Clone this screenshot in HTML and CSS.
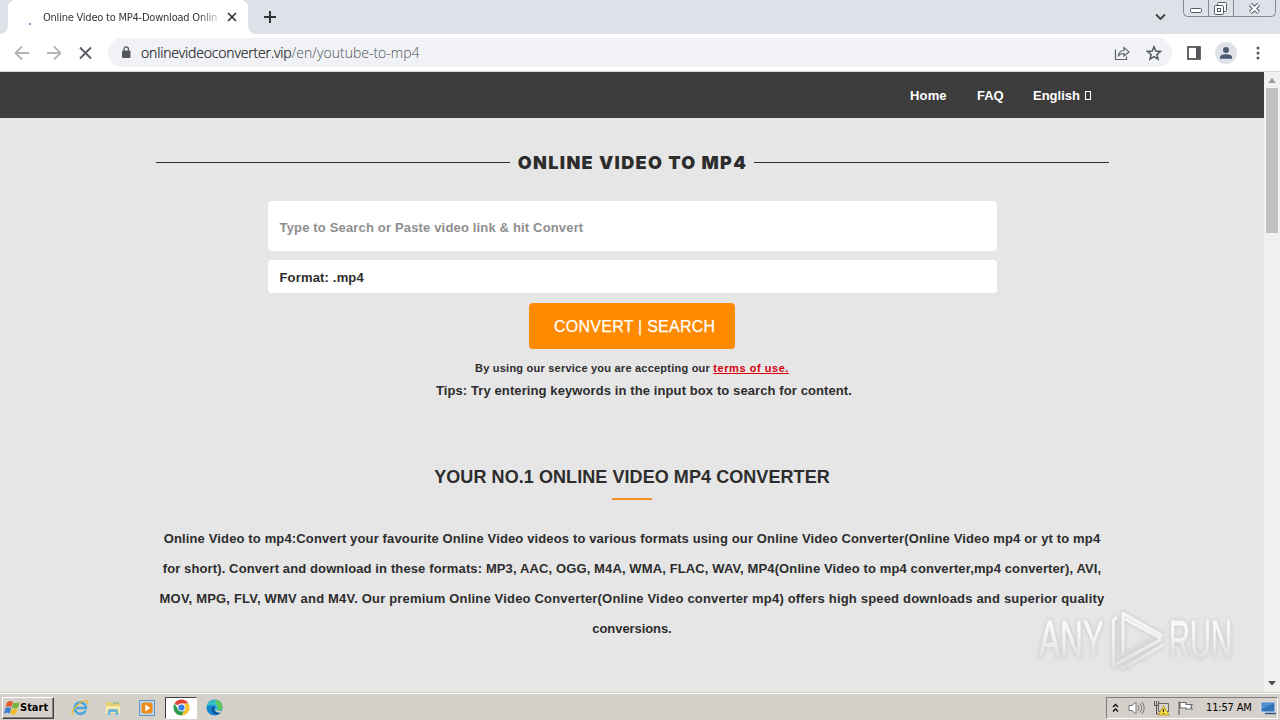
FILE: index.html
```html
<!DOCTYPE html>
<html lang="en">
<head>
<meta charset="utf-8">
<title>Online Video to MP4</title>
<link rel="stylesheet" href="styles.css">
</head>
<body>
<div class="screen">
  <header class="tabstrip">
    <div class="prev-edge"></div>
    <div class="tab">
      <span class="spinner"></span>
      <span class="tab-title">Online Video to MP4-Download Onlin</span>
      <svg class="tab-close" width="10" height="10" viewBox="0 0 10 10"><path d="M1 1l8 8M9 1l-8 8" stroke="#33363a" stroke-width="1.7"/></svg>
    </div>
    <div class="next-edge"><div class="next-fill"></div></div>
    <svg class="plus" width="12" height="12" viewBox="0 0 12 12"><path d="M6 0v12M0 6h12" stroke="#2f3338" stroke-width="2"/></svg>
    <div class="grow"></div>
    <svg class="chev" width="11" height="8" viewBox="0 0 11 8"><path d="M1 1.500l4.500 4.500 4.500-4.500" fill="none" stroke="#3c4043" stroke-width="1.800"/></svg>
    <svg class="winbtns" width="94" height="18" viewBox="0 0 94 18">
      <path d="M.5 0v12.500q0 4 4 4h84q4 0 4-4V0M25.500 0v16M50.500 0v16" fill="none" stroke="#858b96"/>
      <g fill="#fff" stroke="#535b68"><rect x="7.500" y="8.500" width="11" height="4" rx="1"/>
      <rect x="34.500" y="2.500" width="9" height="9" rx="1"/><rect x="31.500" y="5.500" width="9" height="9" rx="1"/><rect x="34.500" y="8.500" width="3" height="3"/></g>
      <path d="M67.500 4.500l8 8M75.500 4.500l-8 8" stroke="#535b68" stroke-width="4.200"/><path d="M67.800 4.800l7.400 7.400M75.200 4.800l-7.400 7.400" stroke="#fff" stroke-width="2.200"/>
    </svg>
  </header>
  <div class="toolbar">
    <svg class="navicons" width="80" height="16" viewBox="0 0 80 16" fill="none">
      <path d="M15 8H2M8 1.500L1.500 8 8 14.500M33 8h13M40 1.500L46.500 8 40 14.500" stroke="#b4b5b7" stroke-width="1.800"/>
      <path d="M66 2.500l11 11M77 2.500l-11 11" stroke="#5a5d61" stroke-width="1.900"/>
    </svg>
    <div class="omnibox">
      <svg width="10" height="13" viewBox="0 0 10 13"><rect x="1" y="4.500" width="8.500" height="7.500" rx="1" fill="#54575b"/><path d="M3 5V3a2.200 2.200 0 014.400 0v2" fill="none" stroke="#54575b" stroke-width="1.300"/></svg>
      <span class="url"><span class="host">onlinevideoconverter.vip</span><span class="path">/en/youtube-to-mp4</span></span>
      <div class="grow"></div>
      <svg width="16" height="16" viewBox="0 0 16 16" fill="none" stroke="#5f6368" stroke-width="1.200"><path d="M1.500 4.500v10h11v-3"/><path d="M4.500 10.500Q5 5.700 10 5.500V2.500l5 4.400L10 11V8.500Q6.500 8.300 4.500 10.500z"/></svg>
      <svg class="star" width="16" height="16" viewBox="0 0 16 16"><path d="M8 1.800l1.800 4.300 4.700.4-3.600 3 1.100 4.600L8 11.600l-4 2.500 1.100-4.600-3.600-3 4.700-.4z" fill="none" stroke="#55595e" stroke-width="1.500"/></svg>
    </div>
    <svg class="panel" width="14" height="14" viewBox="0 0 14 14"><rect x="1" y="1" width="12" height="12" fill="#fff" stroke="#54575b" stroke-width="1.800"/><path d="M9 1h4v12H9z" fill="#54575b"/></svg>
    <svg class="avatar" width="22" height="22" viewBox="0 0 22 22"><circle cx="11" cy="11" r="11" fill="#dee1e6"/><circle cx="11" cy="8" r="3" fill="#4d5871"/><path d="M5 16.700v-1.500q0-3 6-3t6 3v1.500z" fill="#4d5871"/></svg>
    <svg class="dots" width="4" height="14" viewBox="0 0 4 14" fill="#54575b"><circle cx="2" cy="2" r="1.500"/><circle cx="2" cy="7" r="1.500"/><circle cx="2" cy="12" r="1.500"/></svg>
  </div>
  <div class="viewport">
    <main class="page">
      <nav class="nav"><a class="n1">Home</a><a class="n2">FAQ</a><a class="n3">English</a><i class="tofu"></i></nav>
      <h1 class="title"><span class="title-text">ONLINE VIDEO TO MP4</span></h1>
      <form class="form">
        <div class="field search"><span class="placeholder">Type to Search or Paste video link &amp; hit Convert</span></div>
        <div class="field format"><span class="format-text">Format: .mp4</span></div>
        <div class="button"><span class="button-text">CONVERT | SEARCH</span></div>
      </form>
      <p class="terms"><span class="terms-a">By using our service you are accepting our </span><a class="terms-link">terms of use.</a></p>
      <p class="tips"><span>Tips: Try entering keywords in the input box to search for content.</span></p>
      <h2 class="heading"><span>YOUR NO.1 ONLINE VIDEO MP4 CONVERTER</span></h2>
      <div class="rule"></div>
      <div class="copy">
        <span class="l1">Online Video to mp4:Convert your favourite Online Video videos to various formats using our Online Video Converter(Online Video mp4 or yt to mp4</span>
        <span class="l2">for short). Convert and download in these formats: MP3, AAC, OGG, M4A, WMA, FLAC, WAV, MP4(Online Video to mp4 converter,mp4 converter), AVI,</span>
        <span class="l3">MOV, MPG, FLV, WMV and M4V. Our premium Online Video Converter(Online Video converter mp4) offers high speed downloads and superior quality</span>
        <span class="l4">conversions.</span>
      </div>
      <div class="watermark">
        <span class="any">ANY</span>
        <svg width="62" height="66" viewBox="0 0 62 66" fill="none" stroke-linejoin="round" stroke-linecap="round">
          <defs><linearGradient id="fade" gradientUnits="userSpaceOnUse" x1="0" y1="5" x2="0" y2="62"><stop offset="0" stop-color="#f8f8f8"/><stop offset=".5" stop-color="#f0f0f0"/><stop offset="1" stop-color="#dfdfdf"/></linearGradient></defs>
          <path d="M9 11L6.500 12.500V58.500L53 33M16 47V6.500L54.700 28.200L53 31L19 12.500M14.500 59.500L16 61.500L55 38.500" stroke="url(#fade)" stroke-width="3.200"/>
          <path d="M11 12V50L46 31" stroke="#dcdcdc" stroke-width="1.500"/>
        </svg>
        <span class="run">RUN</span>
      </div>
    </main>
    <div class="scrollbar">
      <svg width="16" height="16" viewBox="0 0 16 16"><path d="M4 11l4-5 4 5z" fill="#9b9b9b"/></svg>
      <div class="thumb"></div><div class="grow"></div>
      <svg width="16" height="18" viewBox="0 0 16 18"><path d="M4 7l4 4.500 4-4.500z" fill="#4b4b4b"/></svg>
    </div>
  </div>
  <footer class="taskbar">
    <div class="start">
      <svg width="17" height="16" viewBox="0 0 17 16"><path d="M4 2.500q3-2.500 6-.5L8.500 7q-3-1.500-6 .5z" fill="#e6582a"/><path d="M10.500 2.500q3 1.500 6-.5L15 7.500q-3 2-6 0z" fill="#72b43c"/><path d="M2.200 8.500q3-2 6-.5l-1.500 5.500q-3-1.500-6 .5z" fill="#3d82ce"/><path d="M8.700 8.500q3 1.500 6-.5l-1.500 5.500q-3 2-6 .3z" fill="#f4bd2a"/></svg>
      <span>Start</span>
    </div>
    <svg class="ie" width="18" height="18" viewBox="0 0 18 18" fill="none"><path d="M14.500 11.500A5.700 5.700 0 1 1 15 9H5" stroke="#4ba6e0" stroke-width="2.600"/><path d="M2 16Q-1 13 6 6.500T16.500 2q1 .8-.5 3.500" stroke="#e8bd38" stroke-width="1.300"/></svg>
    <svg class="folder" width="18" height="18" viewBox="0 0 18 18"><path d="M2 3h5l1 1.500h8V14H2z" fill="#e4cf72"/><path d="M2 7h14v7H2z" fill="#f6eaa6"/><path d="M4 16v-4q0-2 2-2h6q2 0 2 2v4h-2.500v-3h-5v3z" fill="#68b5d5"/><path d="M9 4h6" stroke="#79b46c"/></svg>
    <svg class="media" width="16" height="16" viewBox="0 0 16 16"><path d="M.5.5h15v15H.5z" fill="#b9d5ec" stroke="#6494c5"/><rect x="2.500" y="2.500" width="11" height="11" rx="3" fill="#f28b18"/><path d="M6.300 4.500v7l5-3.500z" fill="#fff"/></svg>
    <div class="active"><svg width="17" height="17" viewBox="0 0 18 18"><circle cx="9" cy="9" r="8.500" fill="#fff"/><path d="M9 9L1.640 4.750A8.500 8.500 0 0116.360 4.750L9 5z" fill="#e14335"/><path d="M9 5h7.500A8.500 8.500 0 019 17.500L12.500 11z" fill="#f9c32d"/><path d="M1.640 4.750A8.500 8.500 0 009 17.500L12.500 11 9 12 5.500 11z" fill="#2c9b4b"/><circle cx="9" cy="9" r="4.200" fill="#fff"/><circle cx="9" cy="9" r="3.300" fill="#397ee8"/></svg></div>
    <svg class="edge" width="17" height="17" viewBox="0 0 17 17"><circle cx="8.500" cy="8.500" r="8" fill="#1686cf"/><path d="M.6 8A8 8 0 0116.500 8q.3 4-4.500 4-3 0-2-2 1-4-3.500-4Q2 6 .6 8z" fill="#36bfc5"/><path d="M9 1q7 0 7.500 7 0 4-5 3.500 1.500-3-.5-5z" fill="#62c75b"/><path d="M6 8q-2 6 4.500 7.500 3 0 4.500-2.500-5 2-6.500-1T9 8z" fill="#125299"/><path d="M10 8.500q-.5 3.500 4 3.500h3v2l-5-.5q-4-1-2-5z" fill="#d5d0c9"/></svg>
    <div class="grow"></div>
    <div class="tray">
      <svg class="more" width="7" height="10" viewBox="0 0 7 10" fill="none" stroke="#111" stroke-width="1.400"><path d="M1 4l2.500-2.500L6 4M1 8.500L3.500 6 6 8.500"/></svg>
      <svg class="vol" width="17" height="16" viewBox="0 0 17 16" fill="none" stroke="#77797b"><path d="M1 5.500h3L8 2v12l-4-3.500H1z" fill="#fff"/><path d="M10 5q2 3 0 6M12 3.500q3.500 4.500 0 9M14 2q4.500 6 0 12"/></svg>
      <svg class="net" width="17" height="16" viewBox="0 0 17 16"><path d="M5.500 3.500h10v8h-10z" fill="#d6d6d0" stroke="#666"/><path d="M1.500 1v4.500h4V1M3.500 1v13h4" fill="none" stroke="#555"/><path d="M10.500 6l5.500 9H5.500z" fill="#ffe14b" stroke="#ba9b24"/><path d="M10.500 9v3m0 1v1" stroke="#333" stroke-width="1.300"/></svg>
      <svg class="flag" width="17" height="16" viewBox="0 0 17 16"><path d="M2 15V1.500M3 2.500h6v2h6q-2 2.500 0 4.500H9V8H3z" fill="#fff" stroke="#6c6d6e" stroke-width="1.200"/></svg>
      <span class="clock">11:57 AM</span>
      <svg class="desk" width="17" height="14" viewBox="0 0 17 14"><path d="M1 1h14v10H1z" fill="#3275bb" stroke="#d6e1eb"/><path d="M2 2h12L2 8z" fill="#528fd0"/><path d="M5 12.500h11" stroke="#28568e" stroke-width="1.500"/></svg>
    </div>
  </footer>
</div>
</body>
</html>
```
FILE: styles.css
```css
* { box-sizing: border-box; }
body { margin: 0; font-family: "Liberation Sans", Arial, sans-serif; }
svg { display: block; flex: none; }
h1, h2, p { margin: 0; }
.screen { width: 1280px; height: 720px; display: flex; flex-direction: column; overflow: hidden; }
.grow { flex: 1; }
.tabstrip { height: 34px; flex: none; display: flex; background: linear-gradient(90deg, #fff 250px, #dee1e8 250px); }
.prev-edge { width: 8px; background: #dee1e8; border-bottom-right-radius: 8px; }
.tab { width: 240px; display: flex; align-items: center; background: radial-gradient(circle at 8px 8px, #fff 8px, #dee1e8 8.500px) left top / 8px 8px no-repeat, radial-gradient(circle at 0 8px, #fff 8px, #dee1e8 8.500px) right top / 8px 8px no-repeat, #fff; }
.spinner { width: 2px; height: 2px; margin: 13px 12px 0 21px; background: #3d78c7; border-radius: 1px; }
.tab-title { width: 176px; white-space: nowrap; color: #33363a; font: 11px "DejaVu Sans Condensed", "DejaVu Sans", sans-serif; letter-spacing: -.22px; mask-image: linear-gradient(90deg, #000 155px, transparent 182px); }
.tab-close { margin-left: 8px; }
.next-edge { width: 8px; display: flex; background: #fff; }
.next-fill { width: 8px; background: #dee1e8; border-bottom-left-radius: 8px; }
.plus { margin: 11px 0 0 8px; }
.chev { margin: 13px 17px 0 0; }
.winbtns { margin-right: 3px; }
.toolbar { height: 38px; flex: none; display: flex; align-items: center; background: #fff; border-bottom: 1px solid #d8d9db; }
.navicons { margin: 0 14px; }
.omnibox { width: 1064px; height: 29px; display: flex; align-items: center; padding: 0 10px 0 13px; background: #f0f2f5; border-radius: 15px; }
.url { margin-left: 10px; white-space: nowrap; font: 300 14px "Open Sans", "Noto Sans", sans-serif; color: #111315; }
.host { letter-spacing: -.16px; -webkit-text-stroke: .2px #202124; }
.path { color: #4f5357; }
.star { margin-left: 16px; }
.panel { margin-left: 15px; }
.avatar { margin-left: 14px; }
.dots { margin-left: 19px; }
.viewport { height: 620px; flex: none; display: flex; background: #e6e6e6; }
.page { width: 1264px; display: flex; flex-direction: column; align-items: center; position: relative; color: #2d2d2d; font-weight: bold; font-size: 13px; white-space: nowrap; }
.nav { width: 100%; height: 46px; flex: none; display: flex; align-items: center; padding-left: 910px; background: #3c3c3c; color: #fff; }
.n1 { width: 67px; letter-spacing: .15px; }
.n2 { width: 56px; }
.n3 { width: 52px; }
.tofu { width: 6px; height: 9px; border: 1px solid #fff; }
.title { width: 953px; height: 24px; margin-top: 32px; display: flex; align-items: center; gap: 8px; font: 900 18px/24px Inter, sans-serif; }
.title-text { padding-top: 2px; margin-right: -1px; letter-spacing: 1.350px; }
.title::before, .title::after { content: ""; flex: 1; height: 1px; background: #2d2d2d; }
.form { width: 729px; margin-top: 27px; display: flex; flex-direction: column; align-items: center; }
.field { width: 100%; display: flex; align-items: center; padding: 2px 12px 0; background: #fff; border-radius: 4px; }
.search { height: 50px; color: #8e8e8e; letter-spacing: .165px; }
.format { height: 33px; margin-top: 9px; letter-spacing: .17px; }
.button { width: 206px; height: 46px; margin-top: 10px; padding: 2px 0 0 25px; display: flex; align-items: center; background: #ff8a00; border-radius: 4px; color: #fff; font-size: 16px; font-weight: normal; letter-spacing: .25px; }
.button-text { -webkit-text-stroke: .25px #fff; }
.terms { margin-top: 11px; height: 16px; font-size: 11px; line-height: 16px; white-space: pre; }
.terms-a { letter-spacing: .225px; }
.terms-link { color: #d9000d; text-decoration: underline; letter-spacing: .55px; }
.tips { height: 20px; margin: 5px 0 0 24px; line-height: 20px; letter-spacing: .1px; }
.heading { margin-top: 64px; height: 24px; font-size: 18px; line-height: 24px; letter-spacing: .07px; }
.rule { width: 40px; height: 2px; margin-top: 9px; background: #f49120; }
.copy { margin-top: 24px; display: flex; flex-direction: column; align-items: center; line-height: 30px; }
.l1 { letter-spacing: .14px; }
.l2 { letter-spacing: .12px; }
.l3 { letter-spacing: .187px; }
.l4 { letter-spacing: -.08px; }
.watermark { position: absolute; left: 1039px; top: 535px; display: flex; align-items: center; font: 51px/60px "Liberation Sans", sans-serif; filter: drop-shadow(0 0 2px #c2c2c2); }
.any, .run { color: transparent; background: linear-gradient(#f8f8f8 35%, #eee 55%, #dfdfdf 80%); background-clip: text; -webkit-text-stroke: 1px transparent; transform-origin: left; }
.any { width: 102px; margin-right: -34px; transform: scaleX(.62); }
.run { width: 111px; transform: scaleX(.57); }
.scrollbar { width: 16px; display: flex; flex-direction: column; align-items: center; background: #f1f1f1; }
.thumb { width: 12px; height: 145px; background: #c1c1c1; }
.taskbar { height: 28px; flex: none; display: flex; align-items: center; padding: 2px 2px 0; background: #d5d0c9; border-top: 1px solid #d5d0c9; box-shadow: inset 0 1px #fff; }
.start { width: 52px; height: 22px; display: flex; align-items: center; border: 1px solid; border-color: #fff #404040 #404040 #fff; box-shadow: inset -1px -1px #87837d; font: bold 11px "DejaVu Sans Condensed", sans-serif; color: #000; }
.ie { margin-left: 17px; }
.folder { margin-left: 15px; }
.media { margin-left: 17px; }
.active { width: 32px; height: 22px; margin-left: 10px; display: flex; align-items: center; justify-content: center; background: #fff; border: 1px solid; border-color: #404040 #fff #fff #404040; }
.edge { margin-left: 9px; }
.tray { width: 172px; height: 22px; display: flex; align-items: center; border: 1px solid; border-color: #808080 #fff #fff #808080; }
.more { margin-left: 5px; }
.vol { margin-left: 9px; }
.net { margin-left: 8px; }
.flag { margin-left: 7px; }
.clock { margin-left: 12px; width: 47px; font: 11px "DejaVu Sans Condensed", sans-serif; letter-spacing: -.15px; color: #000; white-space: nowrap; }
.desk { margin-left: 7px; }
```
